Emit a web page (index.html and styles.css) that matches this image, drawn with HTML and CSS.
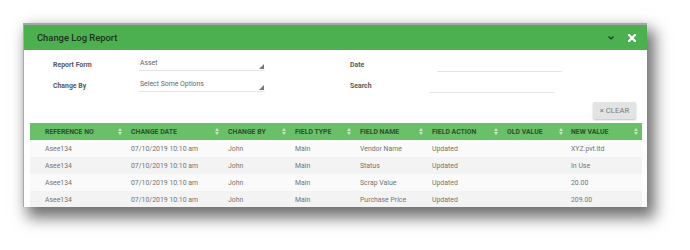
FILE: index.html
```html
<!DOCTYPE html>
<html>
<head>
<meta charset="utf-8">
<link rel="stylesheet" href="styles.css">
</head>
<body>
<div class="modal">
  <div class="titlebar">
    <span class="title">Change Log Report</span>
    <div class="tools">
      <svg class="chev" width="6" height="4" viewBox="0 0 6 4"><polyline points="0.5,0.5 3,3 5.5,0.5" fill="none" stroke="#1d3b1d" stroke-width="1.2"/></svg>
      <svg class="close" width="8" height="8" viewBox="0 0 8 8"><path d="M1,1 L7,7 M7,1 L1,7" stroke="#fff" stroke-width="2.2" stroke-linecap="square"/></svg>
    </div>
  </div>
  <div class="filters">
    <div class="fgroup">
      <div class="frow">
        <span class="flabel">Report Form</span>
        <div class="field select"><span class="fval">Asset</span><svg class="tri" width="5" height="5" viewBox="0 0 5 5"><polygon points="5,0 5,5 0,5" fill="#777"/></svg></div>
      </div>
      <div class="frow">
        <span class="flabel">Change By</span>
        <div class="field select"><span class="fval">Select Some Options</span><svg class="tri" width="5" height="5" viewBox="0 0 5 5"><polygon points="5,0 5,5 0,5" fill="#777"/></svg></div>
      </div>
    </div>
    <div class="fgroup right">
      <div class="frow">
        <span class="flabel">Date</span>
        <div class="field date"></div>
      </div>
      <div class="frow">
        <span class="flabel">Search</span>
        <div class="field search"></div>
      </div>
    </div>
  </div>
  <div class="actions">
    <button class="clear">× CLEAR</button>
  </div>
  <table class="grid">
    <colgroup>
      <col class="c1"><col class="c2"><col class="c3"><col class="c4"><col class="c5"><col class="c6"><col class="c7"><col class="c8">
    </colgroup>
    <thead>
      <tr>
        <th class="first"><div class="th">REFERENCE NO<svg class="sort" width="4" height="7" viewBox="0 0 4 7"><polygon points="2,0 4,3 0,3" /><polygon points="0,4 4,4 2,7"/></svg></div></th>
        <th><div class="th">CHANGE DATE<svg class="sort" width="4" height="7" viewBox="0 0 4 7"><polygon points="2,0 4,3 0,3" /><polygon points="0,4 4,4 2,7"/></svg></div></th>
        <th><div class="th">CHANGE BY<svg class="sort" width="4" height="7" viewBox="0 0 4 7"><polygon points="2,0 4,3 0,3" /><polygon points="0,4 4,4 2,7"/></svg></div></th>
        <th><div class="th">FIELD TYPE<svg class="sort" width="4" height="7" viewBox="0 0 4 7"><polygon points="2,0 4,3 0,3" /><polygon points="0,4 4,4 2,7"/></svg></div></th>
        <th><div class="th">FIELD NAME<svg class="sort" width="4" height="7" viewBox="0 0 4 7"><polygon points="2,0 4,3 0,3" /><polygon points="0,4 4,4 2,7"/></svg></div></th>
        <th><div class="th">FIELD ACTION<svg class="sort" width="4" height="7" viewBox="0 0 4 7"><polygon points="2,0 4,3 0,3" /><polygon points="0,4 4,4 2,7"/></svg></div></th>
        <th><div class="th">OLD VALUE<svg class="sort" width="4" height="7" viewBox="0 0 4 7"><polygon points="2,0 4,3 0,3" /><polygon points="0,4 4,4 2,7"/></svg></div></th>
        <th class="last"><div class="th">NEW VALUE<svg class="sort" width="4" height="7" viewBox="0 0 4 7"><polygon points="2,0 4,3 0,3" /><polygon points="0,4 4,4 2,7"/></svg></div></th>
      </tr>
    </thead>
    <tbody>
      <tr>
        <td class="first">Asee134</td><td>07/10/2019 10:10 am</td><td class="warm">John</td><td>Main</td><td>Vendor Name</td><td>Updated</td><td></td><td class="last">XYZ.pvt.ltd</td>
      </tr>
      <tr>
        <td class="first">Asee134</td><td>07/10/2019 10:10 am</td><td class="warm">John</td><td>Main</td><td>Status</td><td>Updated</td><td></td><td class="last">In Use</td>
      </tr>
      <tr>
        <td class="first">Asee134</td><td>07/10/2019 10:10 am</td><td class="warm">John</td><td>Main</td><td>Scrap Value</td><td>Updated</td><td></td><td class="last">20.00</td>
      </tr>
      <tr>
        <td class="first">Asee134</td><td>07/10/2019 10:10 am</td><td class="warm">John</td><td>Main</td><td class="warm">Purchase Price</td><td>Updated</td><td></td><td class="last warm">209.00</td>
      </tr>
    </tbody>
  </table>
</div>
</body>
</html>
```

FILE: styles.css
```css
html, body {
  margin: 0;
  padding: 0;
  background: #ffffff;
  font-family: Roboto, "Liberation Sans", Arial, sans-serif;
}

body {
  width: 690px;
  height: 250px;
  overflow: hidden;
  padding-top: 23px;
  padding-left: 23px;
  box-sizing: border-box;
}

.modal {
  width: 624px;
  height: 184px;
  box-sizing: border-box;
  background: #ffffff;
  border-left: 1px solid #a9a9a9;
  border-top: 2px solid #a6a6a6;
  overflow: hidden;
  box-shadow: 6px 9px 14px 2px rgba(0, 0, 0, 0.55), 0 -2px 10px rgba(0, 0, 0, 0.06);
}

.titlebar {
  height: 25px;
  background: #4caf50;
  display: flex;
  align-items: center;
  justify-content: space-between;
  padding: 0 11px 0 13px;
}

.title {
  font-size: 9.4px;
  font-weight: 500;
  color: #1c331c;
}

.tools {
  display: flex;
  align-items: center;
  gap: 14px;
}

.chev {
  display: block;
  margin-top: 1px;
}

.close {
  display: block;
}

.filters {
  display: flex;
  padding: 5px 0 0 29px;
}

.fgroup {
  width: 298px;
}

.frow {
  height: 21px;
  display: flex;
  align-items: flex-start;
}

.flabel {
  width: 87px;
  line-height: 21px;
  font-size: 6.9px;
  font-weight: 700;
  color: #595959;
}

.field {
  width: 126px;
  height: 16px;
  border-bottom: 1px solid #e4e4e4;
  box-sizing: border-box;
  display: flex;
  align-items: flex-start;
  justify-content: space-between;
}

.select {
  margin-left: -1px;
}

.fval {
  font-size: 6.9px;
  color: #666;
  line-height: 10px;
  padding-top: 3px;
  padding-left: 1px;
}

.tri {
  align-self: flex-end;
  margin-bottom: 1px;
  margin-right: 1px;
}

.date {
  width: 125px;
  height: 17px;
}

.search {
  width: 125px;
  height: 17px;
  margin-left: -8px;
}

.actions {
  display: flex;
  justify-content: flex-end;
  padding: 5px 11px 0 0;
}

.clear {
  width: 43px;
  height: 17px;
  border: none;
  border-radius: 2px;
  background: #e3e3e3;
  box-shadow: 0 1px 2px rgba(0, 0, 0, 0.25);
  font-family: Roboto, "Liberation Sans", Arial, sans-serif;
  font-size: 7.6px;
  color: #7a7a7a;
  padding: 0;
  letter-spacing: 0.1px;
}

.grid {
  margin: 4px 0 0 6px;
  width: 612px;
  border-collapse: collapse;
  table-layout: fixed;
}

.c1 { width: 95px; }
.c2 { width: 97px; }
.c3 { width: 67px; }
.c4 { width: 65px; }
.c5 { width: 72px; }
.c6 { width: 75px; }
.c7 { width: 65px; }
.c8 { width: 76px; }

.grid th {
  background: #6abf69;
  height: 17px;
  padding: 0 3px 0 6px;
  font-size: 6.9px;
  font-weight: 700;
  color: #2f4f2f;
  text-align: left;
}

.th {
  display: flex;
  align-items: center;
  justify-content: space-between;
}

.sort {
  display: block;
  fill: #c9e8c8;
}

.grid th.first,
.grid td.first {
  padding-left: 15px;
}

.grid th.last {
  padding-left: 5px;
  padding-right: 4px;
}

.grid td {
  height: 17px;
  padding: 0 4px 0 6px;
  font-size: 6.9px;
  color: #737373;
  white-space: nowrap;
}

.grid td.last {
  padding-left: 5px;
}

.grid td.warm {
  color: #80756c;
}

.grid tbody tr:nth-child(odd) td {
  background: #fafafa;
}

.grid tbody tr:nth-child(even) td {
  background: #f3f3f3;
}
```
